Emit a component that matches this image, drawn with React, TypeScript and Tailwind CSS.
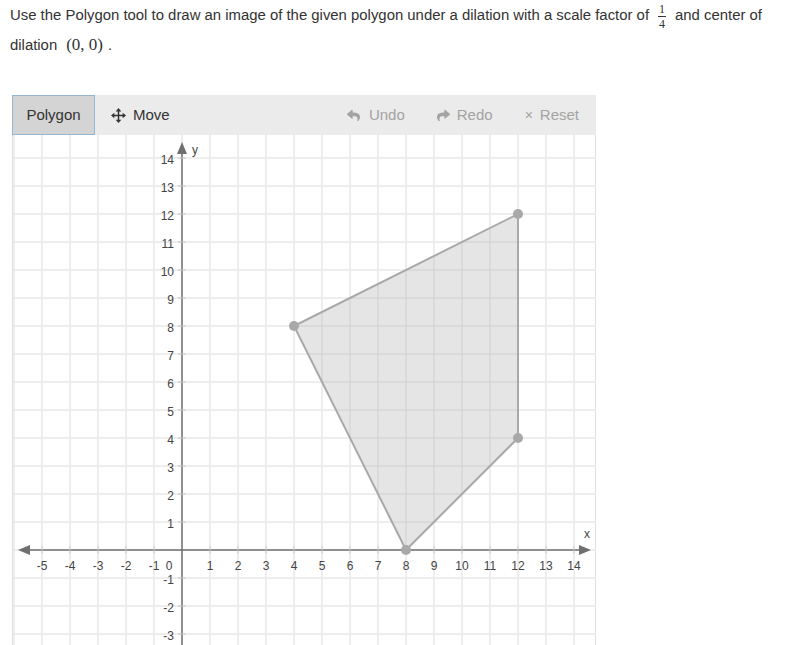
import { FaReply, FaShare } from "react-icons/fa";

const S = 28;
const OX = 169;
const OY = 415;
const W = 583;
const H = 520;

function px(x: number) {
  return OX + x * S;
}
function py(y: number) {
  return OY - y * S;
}

function MoveIcon() {
  return (
    <svg width="15" height="15" viewBox="0 0 16 16" fill="#333">
      <rect x="7.2" y="3" width="1.6" height="10" />
      <rect x="3" y="7.2" width="10" height="1.6" />
      <polygon points="8,0 11,3.6 5,3.6" />
      <polygon points="8,16 11,12.4 5,12.4" />
      <polygon points="0,8 3.6,5 3.6,11" />
      <polygon points="16,8 12.4,5 12.4,11" />
    </svg>
  );
}

function Graph() {
  const vx: number[] = [];
  for (let k = -6; k <= 14; k++) vx.push(k);
  const hy: number[] = [];
  for (let k = -3; k <= 14; k++) hy.push(k);
  const pts: [number, number][] = [
    [4, 8],
    [12, 12],
    [12, 4],
    [8, 0],
  ];
  const poly = pts.map(([x, y]) => `${px(x)},${py(y)}`).join(" ");

  return (
    <svg width={W} height={H} className="block" style={{ fontFamily: "'Liberation Sans', Arial, sans-serif" }}>
      {vx.map((k) => (
        <line key={"v" + k} x1={px(k)} y1={0} x2={px(k)} y2={H} stroke="#e8e8e8" strokeWidth={1.5} />
      ))}
      {hy.map((k) => (
        <line key={"h" + k} x1={0} y1={py(k)} x2={W} y2={py(k)} stroke="#e8e8e8" strokeWidth={1.5} />
      ))}

      <polygon points={poly} fill="#b4b4b4" fillOpacity={0.35} stroke="#a9a9a9" strokeWidth={2} />

      {/* axes */}
      <line x1={14} y1={OY} x2={568} y2={OY} stroke="#6f6f6f" strokeWidth={1.5} />
      <line x1={OX} y1={16} x2={OX} y2={H} stroke="#6f6f6f" strokeWidth={1.5} />
      <polygon points={`5,${OY} 17,${OY - 5} 17,${OY + 5}`} fill="#6f6f6f" />
      <polygon points={`578,${OY} 566,${OY - 5} 566,${OY + 5}`} fill="#6f6f6f" />
      <polygon points={`${OX},7 ${OX - 5},19 ${OX + 5},19`} fill="#6f6f6f" />

      {vx
        .filter((k) => k !== 0 && k >= -5)
        .map((k) => (
          <line key={"tx" + k} x1={px(k)} y1={OY - 4} x2={px(k)} y2={OY + 4} stroke="#c8c8c8" strokeWidth={1} />
        ))}
      {hy
        .filter((k) => k !== 0)
        .map((k) => (
          <line key={"ty" + k} x1={OX - 4} y1={py(k)} x2={OX + 4} y2={py(k)} stroke="#c8c8c8" strokeWidth={1} />
        ))}

      {pts.map(([x, y]) => (
        <circle key={`${x}-${y}`} cx={px(x)} cy={py(y)} r={5} fill="#a9a9a9" />
      ))}

      {vx
        .filter((k) => k !== 0 && k >= -5)
        .map((k) => (
          <text key={"lx" + k} x={px(k)} y={OY + 20} fontSize={12} fill="#444" textAnchor="middle">
            {k}
          </text>
        ))}
      <text x={156} y={OY + 20} fontSize={12} fill="#444" textAnchor="middle">
        0
      </text>
      {hy
        .filter((k) => k !== 0)
        .map((k) => (
          <text key={"ly" + k} x={161} y={py(k) + 6} fontSize={12} fill="#444" textAnchor="end">
            {k}
          </text>
        ))}
      <text x={574} y={403} fontSize={12} fill="#444" textAnchor="middle">
        x
      </text>
      <text x={182} y={19} fontSize={12} fill="#444" textAnchor="middle">
        y
      </text>
    </svg>
  );
}

export default function App() {
  return (
    <div className="h-[645px] w-[800px] overflow-hidden bg-white text-[#333]" style={{ fontFamily: "'Liberation Sans', Arial, sans-serif" }}>
      <p className="px-[10px] text-[14.9px] leading-[30px]">
        Use the Polygon tool to draw an image of the given polygon under a dilation with a scale factor of
        <span className="mx-[9px] inline-flex flex-col items-center align-middle text-[12px] leading-[12px]" style={{ fontFamily: "'Liberation Serif', serif" }}>
          <span className="border-b border-[#333] px-[1px] pb-[1px]">1</span>
          <span className="pt-[1px]">4</span>
        </span>
        and center of
        <br />
        dilation
        <span className="ml-[9px] mr-[5px] text-[17px]" style={{ fontFamily: "'Liberation Serif', serif" }}>
          (0, 0)
        </span>
        .
      </p>

      <div className="ml-[12px] mt-[35px] w-[584px]">
        <div className="flex h-[40px] items-stretch bg-[#ebebeb] text-[15px]">
          <div className="flex w-[83px] items-center justify-center border border-[#94b6d4] bg-[#d4d4d4] text-[#333]">
            Polygon
          </div>
          <div className="ml-[16px] flex items-center gap-[7px] text-[#333]">
            <MoveIcon />
            <span>Move</span>
          </div>
          <div className="ml-auto flex items-center gap-[32px] pr-[17px] text-[#a3a3a3]">
            <div className="flex items-center gap-[9px]">
              <FaReply size={13} color="#a3a3a3" />
              <span>Undo</span>
            </div>
            <div className="flex items-center gap-[7px]">
              <FaShare size={13} color="#a3a3a3" />
              <span>Redo</span>
            </div>
            <div className="flex items-center gap-[7px]">
              <span className="text-[14px]">×</span>
              <span>Reset</span>
            </div>
          </div>
        </div>
        <div className="border-x border-[#e0e0e0]">
          <Graph />
        </div>
      </div>
    </div>
  );
}
